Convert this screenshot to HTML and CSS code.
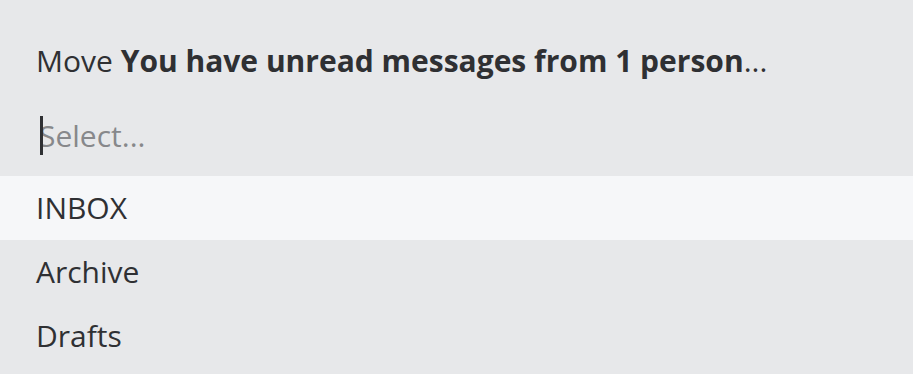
FILE: index.html
```html
<!DOCTYPE html>
<html lang="en">
<head>
<meta charset="utf-8">
<title>Move</title>
<link rel="stylesheet" href="styles.css">
</head>
<body>
<div class="dialog">
  <div class="title">Move <strong>You have unread messages from 1 person</strong>...</div>
  <div class="select">
    <span class="caret"></span>
    <span class="placeholder">Select...</span>
  </div>
  <ul class="options">
    <li class="option active">INBOX</li>
    <li class="option">Archive</li>
    <li class="option">Drafts</li>
  </ul>
</div>
</body>
</html>
```
FILE: styles.css
```css
html, body {
  margin: 0;
  padding: 0;
  background: #e7e8ea;
  overflow: hidden;
}
body {
  font-family: "Open Sans", "Liberation Sans", sans-serif;
  font-size: 30px;
  color: #2f3033;
}
.dialog {
  padding-top: 40px;
}
.title {
  line-height: 42px;
  padding: 0 36px;
  white-space: nowrap;
}
.title strong {
  font-weight: 700;
}
.select {
  position: relative;
  margin-top: 33px;
  padding: 0 36px 0 39px;
  line-height: 42px;
  height: 42px;
}
.placeholder {
  color: #87888b;
}
.caret {
  position: absolute;
  left: 40px;
  top: 1px;
  width: 3px;
  height: 39px;
  background: #2f3033;
}
.options {
  list-style: none;
  margin: 19px 0 0;
  padding: 0;
}
.option {
  height: 64px;
  line-height: 64px;
  padding: 0 36px;
}
.option.active {
  background: #f6f7f9;
}
```
